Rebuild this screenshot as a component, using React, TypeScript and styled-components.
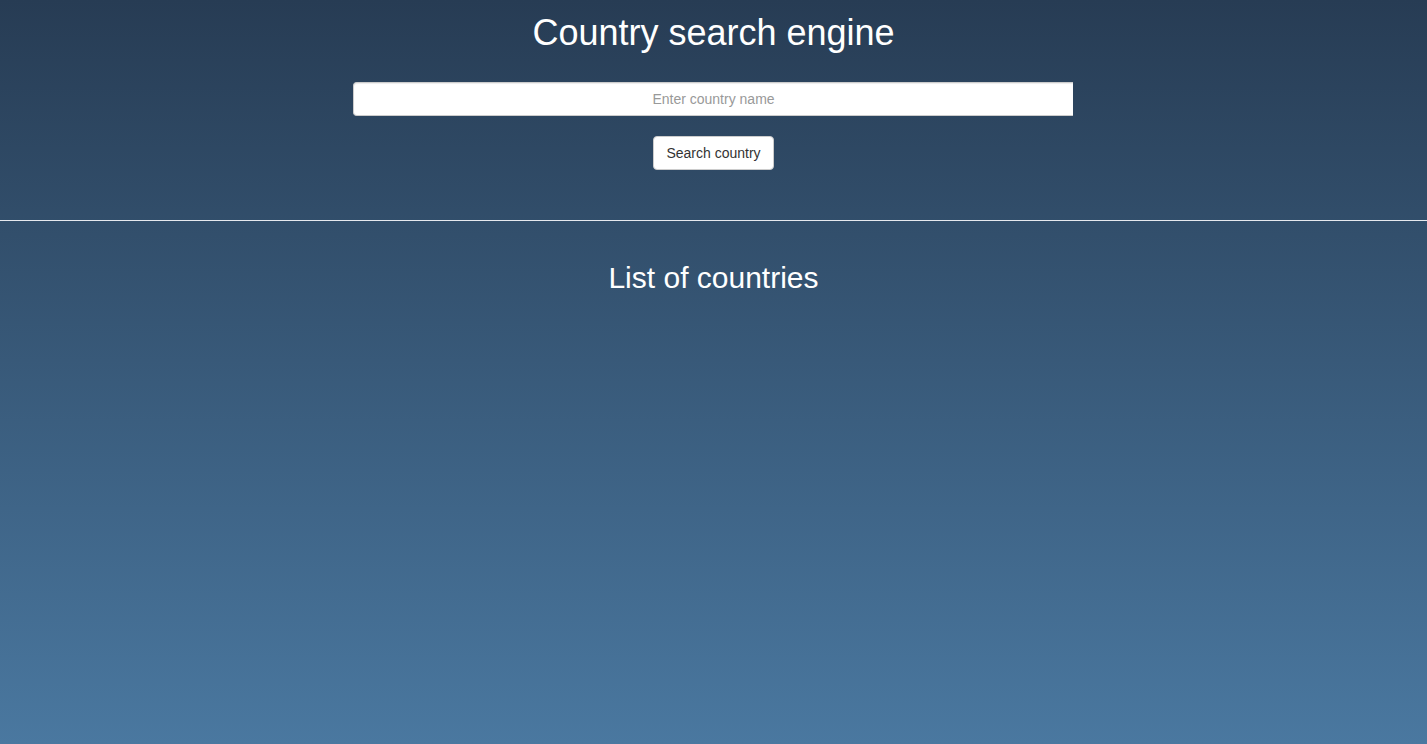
import React, { useState } from 'react';
import styled, { createGlobalStyle } from 'styled-components';

const GlobalStyle = createGlobalStyle`
  html, body {
    margin: 0;
    padding: 0;
  }
  body {
    font-family: "Liberation Sans", Arial, sans-serif;
    background: linear-gradient(to bottom, #273c54 0%, #4a78a0 100%);
    min-height: 100vh;
  }
  * {
    box-sizing: border-box;
  }
`;

export default function App() {
  const [query, setQuery] = useState('');

  return (
    <Page>
      <GlobalStyle />
      <SearchSection>
        <Title>Country search engine</Title>
        <SearchInput
          type="text"
          placeholder="Enter country name"
          value={query}
          onChange={(e) => setQuery(e.target.value)}
        />
        <SearchButton type="button">Search country</SearchButton>
      </SearchSection>
      <Divider />
      <ListSection>
        <SubTitle>List of countries</SubTitle>
      </ListSection>
    </Page>
  );
}

const Page = styled.div`
  min-height: 100vh;
  display: flex;
  flex-direction: column;
  color: #fff;
`;

const SearchSection = styled.section`
  display: flex;
  flex-direction: column;
  align-items: center;
  padding: 13px 0 50px;
`;

const Title = styled.h1`
  margin: 0 0 29px;
  font-size: 36px;
  font-weight: 400;
  line-height: 1.1;
  color: #fff;
`;

const SearchInput = styled.input`
  width: 720px;
  height: 34px;
  padding: 6px 12px;
  font-family: inherit;
  font-size: 14px;
  text-align: center;
  color: #555;
  background: #fff;
  border: 1px solid #ccc;
  border-right: 0;
  border-radius: 4px 0 0 4px;
  box-shadow: inset 0 1px 1px rgba(0, 0, 0, 0.075);
  outline: none;
  margin: 0 1px 20px 0;

  &::placeholder {
    color: #999;
  }
`;

const SearchButton = styled.button`
  height: 34px;
  padding: 6px 12px;
  font-family: inherit;
  font-size: 14px;
  line-height: 20px;
  white-space: nowrap;
  color: #333;
  background: #fff;
  border: 1px solid #ccc;
  border-radius: 4px;
  cursor: pointer;
`;

const Divider = styled.hr`
  margin: 0;
  border: 0;
  border-top: 1px solid #e6e9ee;
`;

const ListSection = styled.section`
  display: flex;
  flex-direction: column;
  align-items: center;
  padding-top: 40px;
`;

const SubTitle = styled.h2`
  margin: 0;
  font-size: 30px;
  font-weight: 400;
  line-height: 1.1;
  color: #fff;
`;
